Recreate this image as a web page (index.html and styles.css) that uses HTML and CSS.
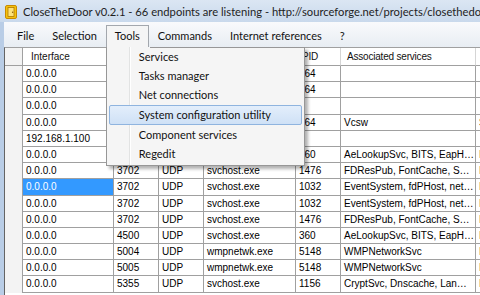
FILE: index.html
```html
<!DOCTYPE html>
<html lang="en">
<head>
    <meta charset="UTF-8">
    <title>CloseTheDoor v0.2.1</title>
    <link rel="stylesheet" href="styles.css">
</head>
<body>
    <div class="window">
        <div class="titlebar">
            <svg class="app-icon" width="12" height="14" viewBox="0 0 12 14">
                <rect x="0.5" y="0.5" width="11" height="13" rx="1.5" fill="#f4c20d" stroke="#c98a00"/>
                <rect x="3" y="2.5" width="6" height="9" fill="#fde27a" stroke="#b07800" stroke-width="0.8"/>
                <circle cx="7.6" cy="7.2" r="0.7" fill="#8a5a00"/>
            </svg>
            <span class="title">CloseTheDoor v0.2.1 - 66 endpoints are listening - http://sourceforge.net/projects/closethedoor/</span>
        </div>

        <div class="frame">
            <nav class="menubar">
                <span class="menu-item">File</span>
                <span class="menu-item">Selection</span>
                <span class="menu-item open">Tools
                    <div class="dropdown">
                        <div class="drop-item">Services</div>
                        <div class="drop-item">Tasks manager</div>
                        <div class="drop-item">Net connections</div>
                        <div class="drop-item hover">System configuration utility</div>
                        <div class="drop-item">Component services</div>
                        <div class="drop-item">Regedit</div>
                    </div>
                </span>
                <span class="menu-item">Commands</span>
                <span class="menu-item">Internet references</span>
                <span class="menu-item">?</span>
            </nav>

            <div class="grid">
                <div class="row head">
                    <span class="rh"></span>
                    <span class="c hd-first">Interface</span>
                    <span class="c">Port</span>
                    <span class="c">Protocol</span>
                    <span class="c">Process</span>
                    <span class="c hd-pid">PID</span>
                    <span class="c hd-pid">Associated services</span>
                    <span class="c"></span>
                </div>
                <div class="row"><span class="rh"></span><span class="c">0.0.0.0</span><span class="c">135</span><span class="c">TCP</span><span class="c">svchost.exe</span><span class="c">564</span><span class="c"></span><span class="c"></span></div>
                <div class="row"><span class="rh"></span><span class="c">0.0.0.0</span><span class="c">49152</span><span class="c">TCP</span><span class="c">wininit.exe</span><span class="c">564</span><span class="c"></span><span class="c"></span></div>
                <div class="row"><span class="rh"></span><span class="c">0.0.0.0</span><span class="c">445</span><span class="c">TCP</span><span class="c">System</span><span class="c"></span><span class="c"></span><span class="c"></span></div>
                <div class="row"><span class="rh"></span><span class="c">0.0.0.0</span><span class="c">49153</span><span class="c">TCP</span><span class="c">svchost.exe</span><span class="c">864</span><span class="c">Vcsw</span><span class="c">S</span></div>
                <div class="row"><span class="rh"></span><span class="c">192.168.1.100</span><span class="c">139</span><span class="c">TCP</span><span class="c">System</span><span class="c"></span><span class="c"></span><span class="c"></span></div>
                <div class="row"><span class="rh"></span><span class="c">0.0.0.0</span><span class="c">500</span><span class="c">UDP</span><span class="c">svchost.exe</span><span class="c">360</span><span class="c">AeLookupSvc, BITS, EapHost, gpsvc</span><span class="c">I</span></div>
                <div class="row"><span class="rh"></span><span class="c">0.0.0.0</span><span class="c">3702</span><span class="c">UDP</span><span class="c">svchost.exe</span><span class="c">1476</span><span class="c">FDResPub, FontCache, SSDPSRV</span><span class="c">I</span></div>
                <div class="row"><span class="rh"></span><span class="c selected">0.0.0.0</span><span class="c">3702</span><span class="c">UDP</span><span class="c">svchost.exe</span><span class="c">1032</span><span class="c">EventSystem, fdPHost, netprofm</span><span class="c">I</span></div>
                <div class="row"><span class="rh"></span><span class="c">0.0.0.0</span><span class="c">3702</span><span class="c">UDP</span><span class="c">svchost.exe</span><span class="c">1032</span><span class="c">EventSystem, fdPHost, netprofm</span><span class="c">I</span></div>
                <div class="row"><span class="rh"></span><span class="c">0.0.0.0</span><span class="c">3702</span><span class="c">UDP</span><span class="c">svchost.exe</span><span class="c">1476</span><span class="c">FDResPub, FontCache, SSDPSRV</span><span class="c">I</span></div>
                <div class="row"><span class="rh"></span><span class="c">0.0.0.0</span><span class="c">4500</span><span class="c">UDP</span><span class="c">svchost.exe</span><span class="c">360</span><span class="c">AeLookupSvc, BITS, EapHost, gpsvc</span><span class="c">I</span></div>
                <div class="row"><span class="rh"></span><span class="c">0.0.0.0</span><span class="c">5004</span><span class="c">UDP</span><span class="c">wmpnetwk.exe</span><span class="c">5148</span><span class="c">WMPNetworkSvc</span><span class="c">I</span></div>
                <div class="row"><span class="rh"></span><span class="c">0.0.0.0</span><span class="c">5005</span><span class="c">UDP</span><span class="c">wmpnetwk.exe</span><span class="c">5148</span><span class="c">WMPNetworkSvc</span><span class="c">I</span></div>
                <div class="row"><span class="rh"></span><span class="c">0.0.0.0</span><span class="c">5355</span><span class="c">UDP</span><span class="c">svchost.exe</span><span class="c">1156</span><span class="c">CryptSvc, Dnscache, LanmanWorkstation</span><span class="c">I</span></div>
            </div>
        </div>
    </div>
</body>
</html>
```

FILE: styles.css
```css
body {
    margin: 0;
    width: 480px;
    height: 295px;
    overflow: hidden;
    background: #fff;
}

.window {
    width: 480px;
    height: 295px;
    display: flex;
    flex-direction: column;
    background: #c9d9ec;
}

.titlebar {
    height: 22px;
    display: flex;
    align-items: center;
    padding-left: 5px;
    background: linear-gradient(#dbe6f3, #c9d9ec);
    white-space: nowrap;
    overflow: hidden;
}

.app-icon {
    flex: none;
    margin-top: 1px;
}

.title {
    margin-left: 6px;
    font-family: Lato, "Noto Sans", sans-serif;
    font-size: 11.2px;
    color: #1e1e1e;
}

.frame {
    flex: 1;
    display: flex;
    flex-direction: column;
    padding-left: 4px;
    background: linear-gradient(90deg, #b9cde6, #c6d7ec);
    min-height: 0;
}

/* menu bar */
.menubar {
    height: 25px;
    box-sizing: border-box;
    display: flex;
    padding: 3px 0 0 4px;
    background: linear-gradient(#f9fafc, #e8edf3);
    font-family: Lato, "Noto Sans", sans-serif;
    font-size: 11px;
    color: #111;
}

.menu-item {
    position: relative;
    height: 22px;
    line-height: 20px;
    padding: 0 8px;
    box-sizing: border-box;
    border: 1px solid transparent;
    border-bottom: none;
    white-space: nowrap;
}

.menu-item.open {
    border-color: #a3a7ad;
    background: #f5f5f5;
    z-index: 2;
}

.dropdown {
    position: absolute;
    top: 21px;
    left: -1px;
    width: 199px;
    box-sizing: border-box;
    padding: 0 2px 2px;
    border: 1px solid #979797;
    border-top: none;
    background: linear-gradient(90deg, #f5f5f5 22px, #e2e3e3 22px, #e2e3e3 23px, #fff 23px, #fff 24px, #f5f5f5 24px);
    box-shadow: 3px 3px 3px rgba(0, 0, 0, 0.3);
}

.dropdown::before {
    content: "";
    position: absolute;
    top: 0;
    left: 43px;
    right: 0;
    border-top: 1px solid #979797;
}

.drop-item {
    height: 19.2px;
    line-height: 18px;
    padding-left: 29px;
    box-sizing: border-box;
    border: 1px solid transparent;
    border-radius: 2px;
}

.drop-item.hover {
    height: 20px;
    background: linear-gradient(#e3eefb, #cfe1f6);
    border-color: #8fb4df;
}

/* data grid */
.grid {
    flex: 1;
    background: #fff;
    border-left: 1px solid #646464;
    border-top: 1px solid #a0a0a0;
    font-family: "Liberation Sans", Arial, sans-serif;
    font-size: 10px;
    color: #000;
    overflow: hidden;
}

.row {
    display: grid;
    grid-template-columns: 18px 91px 45px 45px 92px 45px 135px 60px;
    height: 16.2px;
}

.row.head {
    height: 18px;
}

.rh {
    background: #f3f3f3;
    border-right: 1px solid #a0a0a0;
}

.row.head .rh {
    border-bottom: 1px solid #a0a0a0;
}

.c {
    box-sizing: border-box;
    border-right: 1px solid #a0a0a0;
    border-bottom: 1px solid #a0a0a0;
    padding: 0 0 0 3px;
    line-height: 15px;
    white-space: nowrap;
    overflow: hidden;
    text-overflow: ellipsis;
}

.row.head .c {
    line-height: 17px;
    border-right-color: #d5d5d5;
    color: #111;
}

.row.head .hd-first {
    padding-left: 8px;
}

.row.head .hd-pid {
    padding-left: 6px;
    letter-spacing: -0.2px;
}

.c.selected {
    background: #3399ff;
    color: #fff;
}
```
